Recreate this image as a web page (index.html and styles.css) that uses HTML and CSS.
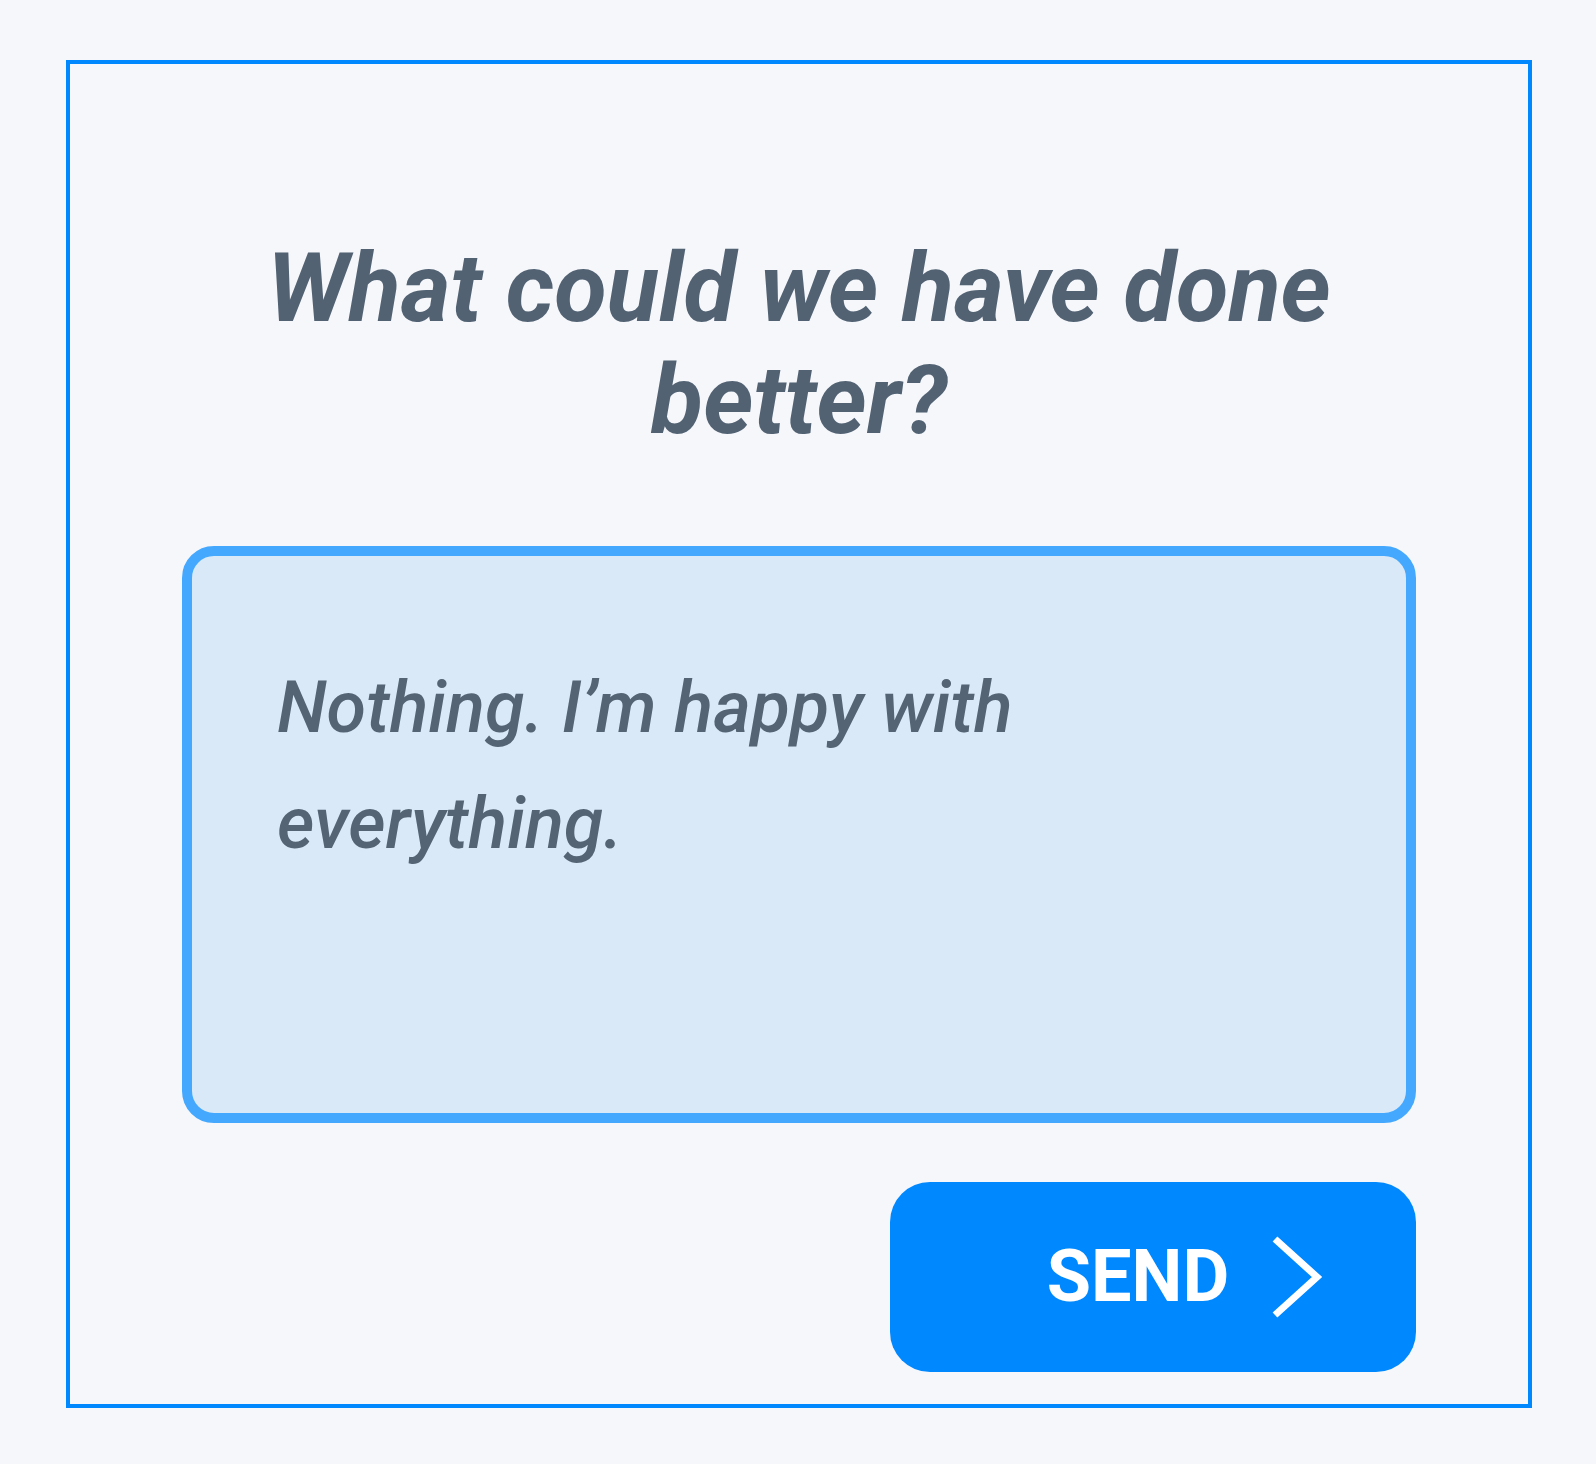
FILE: index.html
```html
<!DOCTYPE html>
<html lang="en">
<head>
<meta charset="utf-8">
<title>Feedback</title>
<link rel="stylesheet" href="styles.css">
</head>
<body>
<main class="card">
  <h1 class="title">What could we have done better?</h1>
  <div class="answer">
    <p class="answer-text">Nothing. I’m happy with everything.</p>
  </div>
  <div class="actions">
    <button class="send" type="button">
      <span class="send-label">SEND</span>
      <svg class="send-icon" width="52" height="82" viewBox="0 0 52 82" aria-hidden="true">
        <polyline points="3,3 45,41 3,79" fill="none" stroke="#ffffff" stroke-width="7" stroke-linejoin="miter" stroke-miterlimit="10"/>
      </svg>
    </button>
  </div>
</main>
</body>
</html>
```
FILE: styles.css
```css
html, body {
  margin: 0;
  padding: 0;
}
body {
  background: #f5f7fb;
  font-family: Roboto, "Noto Sans", sans-serif;
}
.card {
  box-sizing: border-box;
  margin: 60px 64px 0 66px;
  height: 1348px;
  border: 4px solid #0088ff;
  padding: 168px 112px 0;
  display: flex;
  flex-direction: column;
}
.title {
  margin: 0 0 90px;
  text-align: center;
  font-size: 96px;
  line-height: 112px;
  font-weight: 700;
  font-style: italic;
  color: #526273;
}
.answer {
  box-sizing: border-box;
  height: 577px;
  border: 10px solid #44a8ff;
  border-radius: 32px;
  background: #d9e9f8;
  padding: 94px 80px 0 85px;
}
.answer-text {
  margin: 0;
  max-width: 800px;
  font-size: 72px;
  line-height: 116px;
  font-style: italic;
  font-weight: 500;
  color: #546474;
}
.actions {
  display: flex;
  justify-content: flex-end;
  margin-top: 59px;
}
.send {
  box-sizing: border-box;
  width: 526px;
  height: 190px;
  border: none;
  border-radius: 40px;
  background: #0088ff;
  color: #ffffff;
  display: flex;
  align-items: center;
  justify-content: center;
  gap: 43px;
  padding: 0 0 0 65px;
  font-family: Roboto, "Noto Sans", sans-serif;
  cursor: pointer;
}
.send-label {
  font-size: 72px;
  font-weight: 700;
  line-height: 1;
}
.send-icon {
  display: block;
  flex: none;
}
```
